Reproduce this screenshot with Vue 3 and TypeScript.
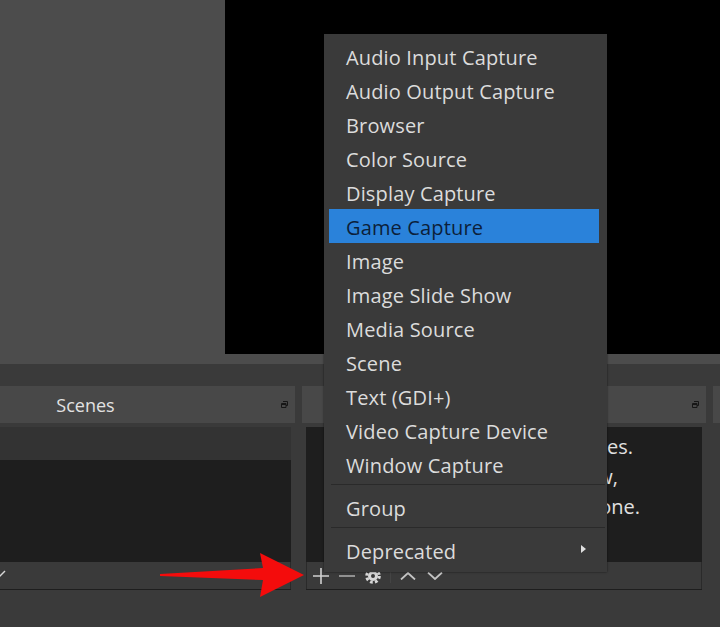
<script setup lang="ts">
const items = ['Audio Input Capture','Audio Output Capture','Browser','Color Source','Display Capture','Game Capture','Image','Image Slide Show','Media Source','Scene','Text (GDI+)','Video Capture Device','Window Capture']
const hints = [
  { text: 'tes.', cls: 'line-a' },
  { text: 'w,', cls: 'line-b' },
  { text: 'one.', cls: 'line-c' }
]
</script>

<template>
  <div class="page">
    <div class="top">
      <div class="side"></div>
      <div class="preview"></div>
    </div>
    <div class="strip"></div>
    <div class="docks">
      <section class="dock scenes">
        <header class="head"><span class="title">Scenes</span>
          <svg class="float" viewBox="0 0 7 7"><path d="M2 .5h4.500v4H5M.5 2.500h4.500v4H.5z" fill="none" stroke="#161616" stroke-width="1"/><path d="M.5 3.500h4.500" stroke="#161616"/></svg>
        </header>
        <div class="panel">
          <div class="list"><div class="row-first"></div></div>
          <div class="tools"><svg class="chev-left" viewBox="0 0 8 8"><path d="M0 7 6 1" stroke="#d8d8d8" stroke-width="1.500" fill="none"/></svg></div>
        </div>
      </section>
      <section class="dock sources">
        <header class="head"><svg class="float" viewBox="0 0 7 7"><path d="M2 .5h4.500v4H5M.5 2.500h4.500v4H.5z" fill="none" stroke="#161616" stroke-width="1"/><path d="M.5 3.500h4.500" stroke="#161616"/></svg></header>
        <div class="panel">
          <div class="list sourcelist">
            <p v-for="h in hints" :key="h.text" class="hint" :class="h.cls">{{ h.text }}</p>
          </div>
          <div class="tools">
            <svg class="tool plus" viewBox="0 0 16 16"><path d="M8 0v16M0 8h16" stroke="#d0d0d0" stroke-width="1.600"/></svg>
            <svg class="tool minus" viewBox="0 0 16 16"><path d="M0 8h16" stroke="#a8a8a8" stroke-width="1.600"/></svg>
            <svg class="tool gear" viewBox="0 0 16 16" fill="none" stroke="#d8d8d8"><circle cx="8" cy="8" r="3.500" stroke-width="3"/><circle cx="8" cy="8" r="6.300" stroke-width="3" stroke-dasharray="2.700 2.250"/></svg>
            <span class="sep"></span>
            <svg class="tool chev first" viewBox="0 0 16 8"><path d="M1 7.500 8 1l7 6.500" stroke="#c4c4c4" stroke-width="1.800" fill="none"/></svg>
            <svg class="tool chev" viewBox="0 0 16 8"><path d="M1 .5 8 7l7-6.500" stroke="#c4c4c4" stroke-width="1.800" fill="none"/></svg>
          </div>
        </div>
      </section>
      <section class="dock third"><header class="head"></header></section>
    </div>

    <svg class="arrow" viewBox="0 0 146 46"><path d="M0 21 103 15 100 0 144 22 100 44 103 27 0 23z" fill="#f40c0c"/></svg>

    <div class="menu">
      <div v-for="it in items" :key="it" class="item" :class="{ active: it === 'Game Capture' }">{{ it }}</div>
      <div class="rule"></div>
      <div class="item">Group</div>
      <div class="rule"></div>
      <div class="item">Deprecated<span class="caret"></span></div>
    </div>
  </div>
</template>

<style>
html, body { margin: 0; background: #3a3a3a; }
</style>

<style scoped>
.page { position: relative; width: 720px; height: 627px; overflow: hidden; background: #3a3a3a; font-family: "Open Sans", "Noto Sans", sans-serif; color: #e0e0e0; }
.top { display: flex; height: 354px; }
.side { width: 225px; background: #4c4c4c; }
.preview { flex: 1; background: #000; }
.strip { height: 10px; background: #4c4c4c; }
.docks { display: flex; gap: 7px; margin-top: 22px; margin-left: -124px; }
.dock { flex: none; }
.scenes { width: 419px; }
.sources { width: 404px; }
.third { width: 40px; }
.head { position: relative; height: 37px; background: #484848; display: flex; align-items: center; justify-content: center; }
.title { font-size: 18px; color: #e2e2e2; }
.float { position: absolute; right: 7px; top: 15px; width: 7px; height: 7px; }
.panel { margin: 4px 4px 0; height: 162px; display: flex; flex-direction: column; border-bottom: 1px solid #1e1e1e; box-sizing: content-box; }
.scenes .panel { margin-left: 0; }
.list { height: 135px; background: #1e1e1e; flex: none; }
.row-first { height: 33px; background: #333; }
.tools { position: relative; height: 27px; background: #3a3a3a; display: flex; align-items: center; padding-left: 6px; border-left: 1px solid #2a2a2a; border-right: 1px solid #2a2a2a; }
.chev-left { position: absolute; left: 122px; top: 8px; width: 8px; height: 8px; }
.sourcelist { padding-top: 5px; box-sizing: border-box; }
.hint { margin: 0; font-size: 20px; height: 30px; line-height: 30px; white-space: nowrap; text-align: right; color: #e0e0e0; }
.line-a { padding-right: 69px; }
.line-b { padding-right: 84px; }
.line-c { padding-right: 62px; }
.tool { display: block; flex: none; }
.plus { width: 16px; height: 16px; }
.minus { width: 16px; height: 16px; margin-left: 10px; }
.gear { width: 16px; height: 16px; margin-left: 10px; }
.sep { width: 1px; height: 14px; background: #444; margin: 0 9px; }
.chev { width: 16px; height: 8px; margin-top: 1px; }
.chev.first { margin-right: 11px; }
.arrow { position: absolute; left: 160px; top: 553px; width: 146px; height: 46px; }
.menu { position: absolute; left: 324px; top: 34px; width: 283px; box-sizing: border-box; background: #3a3a3a; padding: 5px 8px 5px 5px; box-shadow: 0 0 2px rgba(0,0,0,.6); }
.item { height: 34px; line-height: 37px; padding-left: 17px; font-size: 20px; letter-spacing: .15px; color: #dcdcdc; white-space: nowrap; position: relative; }
.item.active { background: #2a82da; color: #0c1f3a; }
.rule { height: 1px; background: #2a2a2a; margin: 3px -6px 5px 2px; }
.caret { position: absolute; right: 13px; top: 12px; width: 0; height: 0; border-left: 5px solid #e0e0e0; border-top: 4.500px solid transparent; border-bottom: 4.500px solid transparent; }
</style>
